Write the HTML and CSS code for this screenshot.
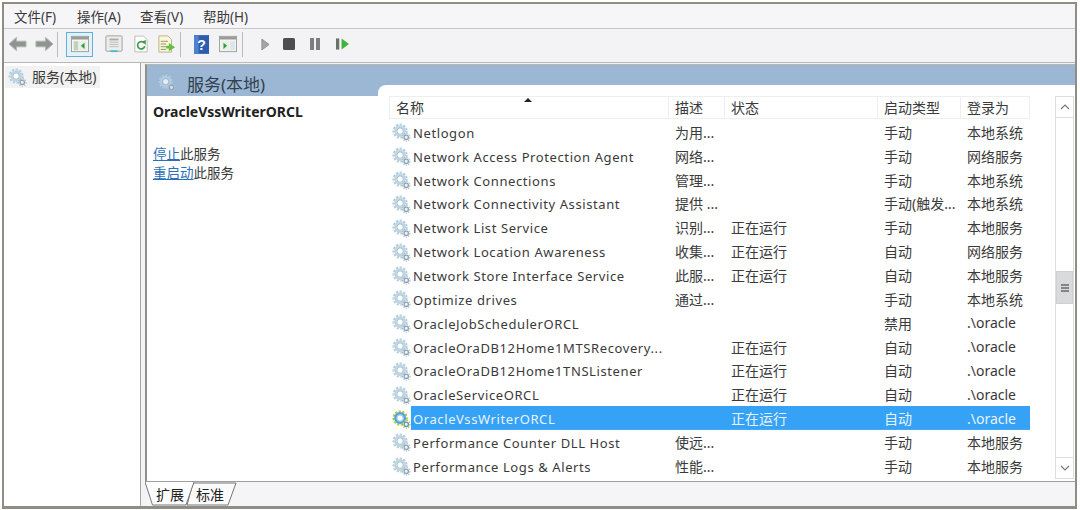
FILE: index.html
```html
<!DOCTYPE html>
<html lang="zh-CN">
<head>
<meta charset="utf-8">
<title>服务</title>
<link rel="stylesheet" href="styles.css">
</head>
<body>
<svg class="defs" width="0" height="0" aria-hidden="true">
  <defs>
    <symbol id="gear" viewBox="0 0 20 20">
      <circle cx="8.500" cy="8.500" r="6.900" fill="none" stroke="#b4cfe0" stroke-width="2.200" stroke-dasharray="2.400 1.500"/>
      <circle cx="8.500" cy="8.500" r="5" fill="none" stroke="#bcd5e5" stroke-width="2.400"/>
      <circle cx="8.500" cy="8.500" r="3.400" fill="#fff" stroke="#8da6b8" stroke-width=".8"/>
      <circle cx="15" cy="15" r="2.300" fill="#eef3f6" stroke="#8fa5b5" stroke-width="1.400"/>
      <circle cx="15" cy="15" r="3.900" fill="none" stroke="#a9bdca" stroke-width="1.200" stroke-dasharray="1.500 1.100"/>
    </symbol>
    <symbol id="gear-run" viewBox="0 0 20 20">
      <circle cx="8.500" cy="8.500" r="7" fill="none" stroke="#b4cc3e" stroke-width="2.200" stroke-dasharray="2.400 1.500"/>
      <circle cx="8.500" cy="8.500" r="5" fill="none" stroke="#4da6dc" stroke-width="2.600"/>
      <circle cx="8.500" cy="8.500" r="3.300" fill="#fff" stroke="#6f9bb8" stroke-width=".6"/>
      <circle cx="15" cy="15" r="2.300" fill="#eef3f6" stroke="#6c96ae" stroke-width="1.400"/>
      <circle cx="15" cy="15" r="3.900" fill="none" stroke="#9db85c" stroke-width="1.200" stroke-dasharray="1.500 1.100"/>
    </symbol>
  </defs>
</svg>
<div class="window">
  <nav class="menubar">
    <span class="menu">文件(F)</span>
    <span class="menu">操作(A)</span>
    <span class="menu">查看(V)</span>
    <span class="menu">帮助(H)</span>
  </nav>
  <div class="toolbar">
    <svg class="tool arrow" viewBox="0 0 20 16"><path d="M1 8 9 1v4h10v6H9v4z" fill="#8f9490" stroke="#b5b8b5"/></svg>
    <svg class="tool arrow" viewBox="0 0 20 16"><path d="M19 8 11 1v4H1v6h10v4z" fill="#8f9490" stroke="#b5b8b5"/></svg>
    <i class="sep"></i>
    <span class="tool-on">
      <svg class="tool wide" viewBox="0 0 20 18"><rect x=".5" y=".5" width="19" height="17" fill="#f4f4f2" stroke="#9a9c98"/><rect x="1" y="1" width="18" height="3" fill="#9a9c98"/><rect x="3" y="6" width="5" height="10" fill="#bcd3bd"/><rect x="9" y="6" width="9" height="10" fill="#e6f1e6"/><path d="m15 7.500-4 3.500 4 3.500z" fill="#2f9b3e"/></svg>
    </span>
    <svg class="tool wide ml-tool" viewBox="0 0 20 20"><rect x="1" y="1" width="18" height="17" rx="1" fill="#eceeec" stroke="#9a9c98"/><rect x="5" y="4" width="10" height="2" fill="#a7abab"/><path d="M5 8h10M5 10.500h10M5 13h10" stroke="#b5b9b9"/><rect x="6" y="17" width="8" height="2" fill="#52b4da"/></svg>
    <svg class="tool doc" viewBox="0 0 16 20"><path d="M1 1h10l4 4v14H1z" fill="#fff" stroke="#b5b6ae"/><path d="M11.800 9a4.200 4.200 0 1 0 .6 3.500" fill="none" stroke="#3ca24a" stroke-width="2"/><path d="m9 7 4.500-1.500V11z" fill="#3ca24a"/></svg>
    <svg class="tool doc2" viewBox="0 0 20 20"><path d="M1 1h10l4 4v14H1z" fill="#faf6d8" stroke="#b3ae88"/><path d="M3 7h8M3 10h6M3 13h6M3 16h6" stroke="#8c8a6a"/><path d="M12 9v3H9v3h3v3l7-4.500z" fill="#67bf3f"/></svg>
    <i class="sep"></i>
    <svg class="tool help" viewBox="0 0 16 20"><rect width="16" height="20" fill="#2b5db0"/><rect x="0" y="0" width="5" height="20" fill="#4e82cf"/><text x="8" y="16" class="help-mark">?</text></svg>
    <svg class="tool wide ml-help" viewBox="0 0 20 18"><rect x=".5" y=".5" width="19" height="17" fill="#f4f4f2" stroke="#9a9c98"/><rect x="1" y="1" width="18" height="3" fill="#9a9c98"/><rect x="3" y="6" width="8" height="10" fill="#e6f1e6"/><path d="m5 7.500 4 3.500-4 3.500z" fill="#2f9b3e"/><rect x="12" y="6" width="6" height="10" fill="#dfe5ea"/></svg>
    <i class="sep"></i>
    <svg class="ctl ctl-play" viewBox="0 0 10 14"><path d="M1 1 9 7 1 13z" fill="#a3a6a3" stroke="#8b8e8b"/></svg>
    <svg class="ctl ctl-stop" viewBox="0 0 12 12"><rect width="12" height="12" rx="1.500" fill="#4e4e4e"/></svg>
    <svg class="ctl ctl-pause" viewBox="0 0 10 12"><path d="M0 0h4v12H0zM6 0h4v12H6z" fill="#7c7f7d"/></svg>
    <svg class="ctl ctl-resume" viewBox="0 0 14 12"><rect width="3.500" height="12" fill="#6c706d"/><path d="M6 0 14 6 6 12z" fill="#3fb53a"/></svg>
  </div>
  <main class="main">
    <aside class="tree">
      <div class="tree-item"><svg class="gear"><use href="#gear"/></svg><span class="tree-label">服务(本地)</span></div>
    </aside>
    <section class="content">
      <div class="panel">
        <header class="panel-head"><svg class="head-gear"><use href="#gear"/></svg>服务(本地)</header>
        <div class="panel-body">
          <div class="detail">
            <h2 class="detail-title">OracleVssWriterORCL</h2>
            <p class="detail-actions"><a class="link">停止</a>此服务<br><a class="link">重启动</a>此服务</p>
          </div>
          <div class="list-wrap">
            <div class="list">
              <div class="row head-row">
                <span class="hc">名称<i class="sort"></i></span><span class="hc">描述</span><span class="hc">状态</span><span class="hc">启动类型</span><span class="hc">登录为</span>
              </div>
              <div class="row"><span class="name"><svg class="gear"><use href="#gear"/></svg>Netlogon</span><span>为用...</span><span></span><span>手动</span><span>本地系统</span></div>
              <div class="row"><span class="name"><svg class="gear"><use href="#gear"/></svg>Network Access Protection Agent</span><span>网络...</span><span></span><span>手动</span><span>网络服务</span></div>
              <div class="row"><span class="name"><svg class="gear"><use href="#gear"/></svg>Network Connections</span><span>管理...</span><span></span><span>手动</span><span>本地系统</span></div>
              <div class="row"><span class="name"><svg class="gear"><use href="#gear"/></svg>Network Connectivity Assistant</span><span>提供 ...</span><span></span><span>手动(触发...</span><span>本地系统</span></div>
              <div class="row"><span class="name"><svg class="gear"><use href="#gear"/></svg>Network List Service</span><span>识别...</span><span>正在运行</span><span>手动</span><span>本地服务</span></div>
              <div class="row"><span class="name"><svg class="gear"><use href="#gear"/></svg>Network Location Awareness</span><span>收集...</span><span>正在运行</span><span>自动</span><span>网络服务</span></div>
              <div class="row"><span class="name"><svg class="gear"><use href="#gear"/></svg>Network Store Interface Service</span><span>此服...</span><span>正在运行</span><span>自动</span><span>本地服务</span></div>
              <div class="row"><span class="name"><svg class="gear"><use href="#gear"/></svg>Optimize drives</span><span>通过...</span><span></span><span>手动</span><span>本地系统</span></div>
              <div class="row"><span class="name"><svg class="gear"><use href="#gear"/></svg>OracleJobSchedulerORCL</span><span></span><span></span><span>禁用</span><span>.\oracle</span></div>
              <div class="row"><span class="name"><svg class="gear"><use href="#gear"/></svg>OracleOraDB12Home1MTSRecovery...</span><span></span><span>正在运行</span><span>自动</span><span>.\oracle</span></div>
              <div class="row"><span class="name"><svg class="gear"><use href="#gear"/></svg>OracleOraDB12Home1TNSListener</span><span></span><span>正在运行</span><span>自动</span><span>.\oracle</span></div>
              <div class="row"><span class="name"><svg class="gear"><use href="#gear"/></svg>OracleServiceORCL</span><span></span><span>正在运行</span><span>自动</span><span>.\oracle</span></div>
              <div class="row selected"><span class="name"><svg class="gear"><use href="#gear-run"/></svg>OracleVssWriterORCL</span><span></span><span>正在运行</span><span>自动</span><span>.\oracle</span></div>
              <div class="row"><span class="name"><svg class="gear"><use href="#gear"/></svg>Performance Counter DLL Host</span><span>使远...</span><span></span><span>手动</span><span>本地服务</span></div>
              <div class="row"><span class="name"><svg class="gear"><use href="#gear"/></svg>Performance Logs &amp; Alerts</span><span>性能...</span><span></span><span>手动</span><span>本地服务</span></div>
            </div>
            <div class="scrollbar">
              <span class="sb-btn"><svg viewBox="0 0 10 6" class="chev"><path d="M1 5 5 1l4 4" fill="none" stroke="#7a7a7a" stroke-width="1.200"/></svg></span>
              <span class="sb-track"><span class="sb-thumb"><i></i><i></i><i></i></span></span>
              <span class="sb-btn"><svg viewBox="0 0 10 6" class="chev"><path d="M1 1 5 5l4-4" fill="none" stroke="#7a7a7a" stroke-width="1.200"/></svg></span>
            </div>
          </div>
        </div>
      </div>
      <div class="tabs">
        <svg class="tab-shapes" viewBox="0 0 95 24" aria-hidden="true">
          <path d="M48 1h43l-8 22H42z" fill="#fbfbfc" stroke="#77777a"/>
          <path d="M0 0 7.500 23H41L49 0z" fill="#fdfdfd"/>
          <path d="M0 0 7.500 23H41L49 0" fill="none" stroke="#77777a"/>
        </svg>
        <span class="tab">扩展</span>
        <span class="tab">标准</span>
      </div>
    </section>
  </main>
</div>
</body>
</html>
```
FILE: styles.css
```css
* { box-sizing: border-box; }
html, body { margin: 0; height: 100%; }
body {
  background: #fff;
  padding: 2px 3px 0 2px;
  font: 14px "Noto Sans", "Noto Sans CJK SC", sans-serif;
  color: #3a3a3a;
  overflow: hidden;
}
.defs { position: absolute; }
.window {
  height: 507px;
  border: 2px solid #8f8d86;
  border-bottom-width: 3px;
  display: flex;
  flex-direction: column;
  background: #f3f3f5;
}
.menubar {
  height: 25px;
  flex: none;
  display: flex;
  align-items: center;
  gap: 18px;
  padding-left: 10px;
  background: #f6f6f8;
  border-bottom: 1px solid #c9c8c4;
  font-size: 13.500px;
}
.menu { width: 45px; white-space: nowrap; }
.toolbar {
  height: 34px;
  flex: none;
  display: flex;
  align-items: center;
  padding: 0 0 3px 4px;
  border-bottom: 1px solid #b9b8b4;
}
.tool { display: block; flex: none; }
.arrow { width: 19px; height: 16px; margin-right: 8px; }
.arrow + .arrow { margin-right: 3px; }
.sep { width: 1px; height: 25px; background: #bcbcb8; flex: none; }
.tool-on {
  margin-left: 8px;
  width: 27px;
  height: 25px;
  border: 1px solid #5fb2e0;
  background: #e4f1f9;
  display: flex;
  align-items: center;
  justify-content: center;
  flex: none;
}
.wide { width: 18px; height: 18px; }
.ml-tool { margin-left: 12px; }
.doc { width: 14px; height: 18px; margin-left: 11px; }
.doc2 { width: 18px; height: 18px; margin-left: 10px; margin-right: 4px; }
.help { width: 15px; height: 19px; margin-left: 13px; }
.help-mark { font: bold 15px "Liberation Sans", sans-serif; fill: #fff; text-anchor: middle; }
.ml-help { margin-left: 10px; margin-right: 5px; }
.ctl { display: block; flex: none; }
.ctl-play { width: 9px; height: 13px; margin-left: 18px; }
.ctl-stop { width: 12px; height: 12px; margin-left: 13px; }
.ctl-pause { width: 10px; height: 12px; margin-left: 15px; }
.ctl-resume { width: 13px; height: 12px; margin-left: 16px; }
.main {
  flex: 1;
  min-height: 0;
  display: flex;
}
.tree {
  width: 137px;
  flex: none;
  background: #fff;
  border-right: 1px solid #a8a8a6;
  padding: 3px 0 0 1px;
}
.tree-item {
  width: 95px;
  height: 22px;
  display: flex;
  align-items: center;
  gap: 5px;
  background: #f2f2f2;
  font-size: 14px;
  white-space: nowrap;
  padding-left: 3px;
}
.tree-label { padding-bottom: 2px; }
.gear { width: 19px; height: 19px; flex: none; }
.content {
  flex: 1;
  min-width: 0;
  padding: 1px 0 0 4px;
  display: flex;
  flex-direction: column;
}
.panel {
  flex: 1;
  min-height: 0;
  display: flex;
  flex-direction: column;
  border-left: 2px solid #8f8f8d;
  border-top: 1px solid #b5b5b3;
  border-bottom: 1px solid #9f9f9d;
  background: #fff;
}
.panel-head {
  height: 31px;
  flex: none;
  background: #9bb7d4;
  display: flex;
  align-items: center;
  padding: 5px 0 0 11px;
  gap: 11px;
  font-size: 17px;
  color: #33404d;
}
.head-gear { width: 18px; height: 18px; opacity: .75; }
.panel-body {
  flex: 1;
  min-height: 0;
  display: flex;
}
.detail {
  width: 231px;
  flex: none;
  padding: 6px 0 0 6px;
}
.detail-title {
  margin: 0 0 24px;
  font: bold 14px "Noto Sans", sans-serif;
  color: #222;
}
.detail-actions { margin: 0; font-size: 13.500px; line-height: 19px; }
.link { color: #2a6fb8; text-decoration: underline; }
.list-wrap {
  flex: 1;
  min-width: 0;
  margin-top: -11px;
  background: #fff;
  border-radius: 8px 0 0 0;
  display: flex;
  padding: 11px 1px 0 11px;
  gap: 25px;
}
.list { width: 641px; flex: none; }
.row {
  height: 23.850px;
  display: grid;
  grid-template-columns: 280px 56px 153px 83px 69px;
  align-items: center;
  white-space: nowrap;
  font-size: 13px;
}
.row > span:not(.name) { padding-left: 6px; font-size: 14px; letter-spacing: 0; }
.head-row { height: 24px; align-items: start; }
.row > .hc {
  height: 23px;
  position: relative;
  display: flex;
  align-items: center;
  border: 1px solid #eeeef0;
  border-left: 0;
  padding: 0 0 1px 5px;
}
.row > .hc:first-child { border-left: 1px solid #eeeef0; }
.sort {
  position: absolute;
  left: 134px;
  top: 1px;
  border: 4px solid transparent;
  border-top: 0;
  border-bottom: 4px solid #222;
}
.name {
  display: flex;
  align-items: center;
  gap: 2px;
  overflow: hidden;
  letter-spacing: .6px;
  padding-top: 2px;
}
.name .gear { margin-left: 3px; }
.selected {
  background: linear-gradient(#36a2f6, #36a2f6) right / 619px 100% no-repeat;
  color: #e6f3ff;
}
.scrollbar {
  width: 19px;
  flex: none;
  height: 383px;
  display: flex;
  flex-direction: column;
  border: 1px solid #dedede;
  background: #fff;
}
.sb-btn {
  height: 20px;
  flex: none;
  display: flex;
  align-items: center;
  justify-content: center;
  background: #fff;
}
.chev { width: 10px; height: 6px; }
.sb-track {
  flex: 1;
  border-top: 1px solid #dedede;
  border-bottom: 1px solid #dedede;
  padding-top: 153px;
}
.sb-thumb {
  display: flex;
  flex-direction: column;
  gap: 1px;
  align-items: center;
  justify-content: center;
  height: 33px;
  background: #d9dadc;
  border: 1px solid #cfd0d2;
}
.sb-thumb i { width: 8px; height: 2px; background: #858585; }
.tabs {
  height: 24px;
  flex: none;
  position: relative;
  display: flex;
  gap: 12px;
  padding-left: 11px;
  background: #f5f5f8;
}
.tab-shapes { position: absolute; left: 0; top: 0; width: 95px; height: 24px; }
.tab {
  position: relative;
  display: flex;
  align-items: center;
  font-size: 14px;
  color: #222;
}
```
